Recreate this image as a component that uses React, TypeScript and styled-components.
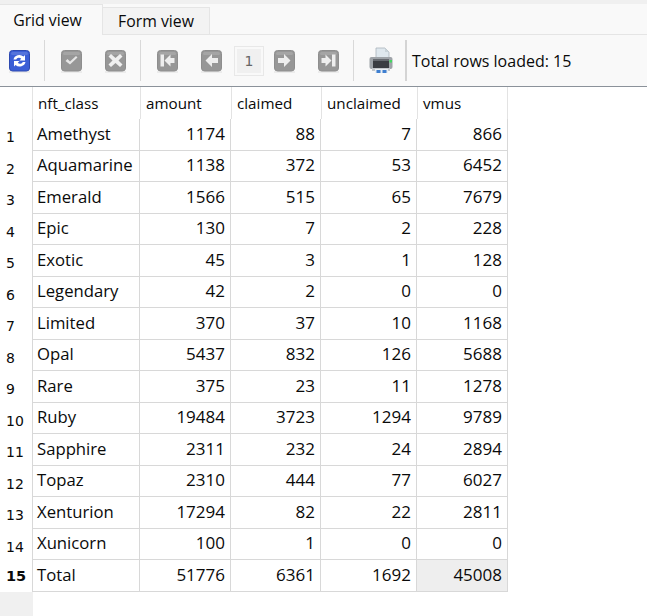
import React from "react";
import styled, { createGlobalStyle } from "styled-components";

const GlobalStyle = createGlobalStyle`
  html, body {
    margin: 0;
    padding: 0;
    height: 100%;
    background: #fff;
  }
  #root {
    height: 100%;
  }
`;

const Page = styled.div`
  width: 647px;
  height: 616px;
  overflow: hidden;
  display: flex;
  flex-direction: column;
  font-family: "Open Sans", "Noto Sans", "Liberation Sans", sans-serif;
  font-size: 14px;
  color: #0a0a0a;
`;

const TabBar = styled.div`
  height: 35px;
  box-sizing: border-box;
  display: flex;
  align-items: flex-end;
  background: linear-gradient(#f0f0f0 4px, #f9f9f9 4px);
  border-bottom: 1px solid #e5e5e5;
`;

const Tab = styled.div<{ $active?: boolean }>`
  box-sizing: border-box;
  display: flex;
  align-items: center;
  justify-content: center;
  width: ${(p) => (p.$active ? "103px" : "107px")};
  height: ${(p) => (p.$active ? "31px" : "27px")};
  margin-bottom: ${(p) => (p.$active ? "-1px" : "0")};
  padding-right: ${(p) => (p.$active ? "7px" : "0")};
  background: ${(p) => (p.$active ? "#f9f9f9" : "#f3f3f3")};
  border-top: 1px solid #e5e5e5;
  border-right: 1px solid #e5e5e5;
  font-size: 15.8px;
`;

const Toolbar = styled.div`
  height: 52px;
  box-sizing: border-box;
  display: flex;
  align-items: center;
  padding-left: 9px;
  background: #f9f9f9;
  border-bottom: 1px solid #8b929a;
`;

const Separator = styled.div<{ $wide?: boolean }>`
  flex: none;
  width: ${(p) => (p.$wide ? "2px" : "1px")};
  height: 41px;
  background: ${(p) => (p.$wide ? "#d4d4d4" : "#d9d9d9")};
  margin: 0 ${(p) => (p.$wide ? "5px" : "16px")} 0
    ${(p) => (p.$wide ? "12px" : "14px")};
`;

const ToolIcon = styled.svg<{ $gap?: number }>`
  display: block;
  flex: none;
  margin-right: ${(p) => p.$gap ?? 0}px;
`;

const GlyphIcon = styled(ToolIcon)`
  margin-top: 3px;
  filter: blur(0.3px);
`;

const PrinterIcon = styled(ToolIcon)`
  margin-left: -1px;
  filter: blur(0.25px);
`;

const PageBox = styled.div`
  box-sizing: border-box;
  flex: none;
  width: 30px;
  height: 30px;
  margin: 0 10px 0 12px;
  border: 1px solid #e8e8e8;
  box-shadow: inset 0 0 0 2px #f9f9f9;
  background: #f0f0f0;
  display: flex;
  align-items: center;
  justify-content: center;
  font-family: "DejaVu Sans", sans-serif;
  font-size: 14px;
  color: #666;
`;

const Status = styled.div`
  font-size: 16px;
  white-space: nowrap;
`;

const Row = styled.div<{ $head?: boolean }>`
  display: grid;
  grid-template-columns: 32px 108px 91px 90px 96px 91px;
  height: ${(p) => (p.$head ? "32px" : "31.5px")};
  box-sizing: border-box;
`;

const RowNumber = styled.div<{ $bold?: boolean }>`
  display: flex;
  align-items: center;
  padding: ${(p) => (p.$bold ? "1px" : "5px")} 0 0 6px;
  font-family: "DejaVu Sans", sans-serif;
  font-size: ${(p) => (p.$bold ? "14.5px" : "14px")};
  font-weight: ${(p) => (p.$bold ? 700 : 400)};
`;

const HeadCell = styled.div`
  display: flex;
  align-items: center;
  padding-left: 5px;
  border-left: 1px solid #e3e3e3;
  font-size: 15.2px;
  white-space: nowrap;
  &:last-child {
    border-right: 1px solid #e3e3e3;
  }
`;

const Cell = styled.div<{ $selected?: boolean }>`
  display: flex;
  align-items: center;
  justify-content: flex-end;
  padding: 0 5px 2px 4px;
  border-right: 1px solid #d8d8d8;
  border-bottom: 1px solid #d8d8d8;
  background: ${(p) => (p.$selected ? "#eeeeee" : "transparent")};
  font-size: 17px;
  white-space: nowrap;
`;

const NameCell = styled(Cell)`
  justify-content: flex-start;
  border-left: 1px solid #d8d8d8;
  font-size: 16.7px;
`;

const GutterFill = styled.div`
  flex: 1;
  width: 33px;
  background: #f0f0f0;
`;

function Glyph({ gap, blue, children }: { gap?: number; blue?: boolean; children: React.ReactNode }) {
  const fill = blue ? "#3a5ed6" : "#979797";
  const edge = blue ? "#2d49b0" : "#8e8e8e";
  return (
    <GlyphIcon $gap={gap} width="21" height="24" viewBox="0 0 21 24">
      <rect x="0" y="21" width="21" height="2" fill="#ececec" />
      <rect x="0.5" y="0.5" width="20" height="20.5" rx="3" fill={fill} stroke={edge} />
      <rect x="2" y="2" width="17" height="3" rx="1.5" fill="#fff" opacity="0.14" />
      {children}
    </GlyphIcon>
  );
}

function Printer() {
  return (
    <PrinterIcon width="24" height="27" viewBox="0 0 24 27">
      <path d="M7 1h9l4 4v7H7z" fill="#dfe8ee" stroke="#aab4bb" strokeWidth="0.8" />
      <path d="M16 1v4h4" fill="#c9d4da" />
      <rect x="0.5" y="10" width="23" height="12" rx="2" fill="#9ea3a8" />
      <rect x="4" y="12" width="16" height="9" fill="#3a3d42" />
      <rect x="4" y="12" width="16" height="2" fill="#666a70" />
      <rect x="20.5" y="13" width="2.5" height="2.5" fill="#43d65f" />
      <rect x="3" y="21" width="18" height="3" fill="#c4c8cc" />
      <rect x="6" y="22" width="13" height="4" fill="#e9eef2" />
      <rect x="7.5" y="23" width="4" height="3" fill="#3f7fd0" />
      <rect x="13.5" y="23" width="4" height="3" fill="#3f7fd0" />
    </PrinterIcon>
  );
}

const rows: [string, number, number, number, number][] = [
  ["Amethyst", 1174, 88, 7, 866],
  ["Aquamarine", 1138, 372, 53, 6452],
  ["Emerald", 1566, 515, 65, 7679],
  ["Epic", 130, 7, 2, 228],
  ["Exotic", 45, 3, 1, 128],
  ["Legendary", 42, 2, 0, 0],
  ["Limited", 370, 37, 10, 1168],
  ["Opal", 5437, 832, 126, 5688],
  ["Rare", 375, 23, 11, 1278],
  ["Ruby", 19484, 3723, 1294, 9789],
  ["Sapphire", 2311, 232, 24, 2894],
  ["Topaz", 2310, 444, 77, 6027],
  ["Xenturion", 17294, 82, 22, 2811],
  ["Xunicorn", 100, 1, 0, 0],
  ["Total", 51776, 6361, 1692, 45008],
];

const columns = ["nft_class", "amount", "claimed", "unclaimed", "vmus"];

export default function App() {
  return (
    <Page>
      <GlobalStyle />
      <TabBar>
        <Tab $active>Grid view</Tab>
        <Tab>Form view</Tab>
      </TabBar>
      <Toolbar>
        <Glyph blue>
          <path d="M4.5 9.5a6 5.5 0 0 1 10-3l1.5-1.5v5.5h-5.5l1.7-1.7a3 3 0 0 0-5 .7z" fill="#fff" />
          <path d="M16.5 12a6 5.5 0 0 1-10 3L5 16.5V11h5.5l-1.7 1.7a3 3 0 0 0 5-.7z" fill="#fff" />
        </Glyph>
        <Separator />
        <Glyph gap={23}>
          <path d="M4.5 11l2-2 2.5 2.5L15 6l1.5 1.5-7.5 7z" fill="#e6e6e6" />
        </Glyph>
        <Glyph>
          <path d="M6 4l4.5 4L15 4l2.5 2.5-4 4 4 4L15 17l-4.5-4L6 17l-2.5-2.5 4-4-4-4z" fill="#f0f0f0" />
        </Glyph>
        <Separator />
        <Glyph gap={23}>
          <path d="M3.5 4.5h3.5v12H3.5zM7.5 10.5l6-6v3.5h4v5h-4v3.5z" fill="#eee" />
        </Glyph>
        <Glyph>
          <path d="M4.5 10.5l6.5-6.5v4h6v5h-6v4z" fill="#eee" />
        </Glyph>
        <PageBox>1</PageBox>
        <Glyph gap={23}>
          <path d="M16.5 10.5L10 4v4H4v5h6v4z" fill="#eee" />
        </Glyph>
        <Glyph>
          <path d="M17.5 4.5H14v12h3.5zM13.5 10.5l-6-6v3.5h-4v5h4v3.5z" fill="#eee" />
        </Glyph>
        <Separator />
        <Printer />
        <Separator $wide />
        <Status>Total rows loaded: 15</Status>
      </Toolbar>
      <Row $head>
        <div />
        {columns.map((c) => (
          <HeadCell key={c}>{c}</HeadCell>
        ))}
      </Row>
      {rows.map((r, i) => (
        <Row key={r[0]}>
          <RowNumber $bold={i === rows.length - 1}>{i + 1}</RowNumber>
          <NameCell>{r[0]}</NameCell>
          <Cell>{r[1]}</Cell>
          <Cell>{r[2]}</Cell>
          <Cell>{r[3]}</Cell>
          <Cell $selected={r[4] === 45008}>{r[4]}</Cell>
        </Row>
      ))}
      <GutterFill />
    </Page>
  );
}
